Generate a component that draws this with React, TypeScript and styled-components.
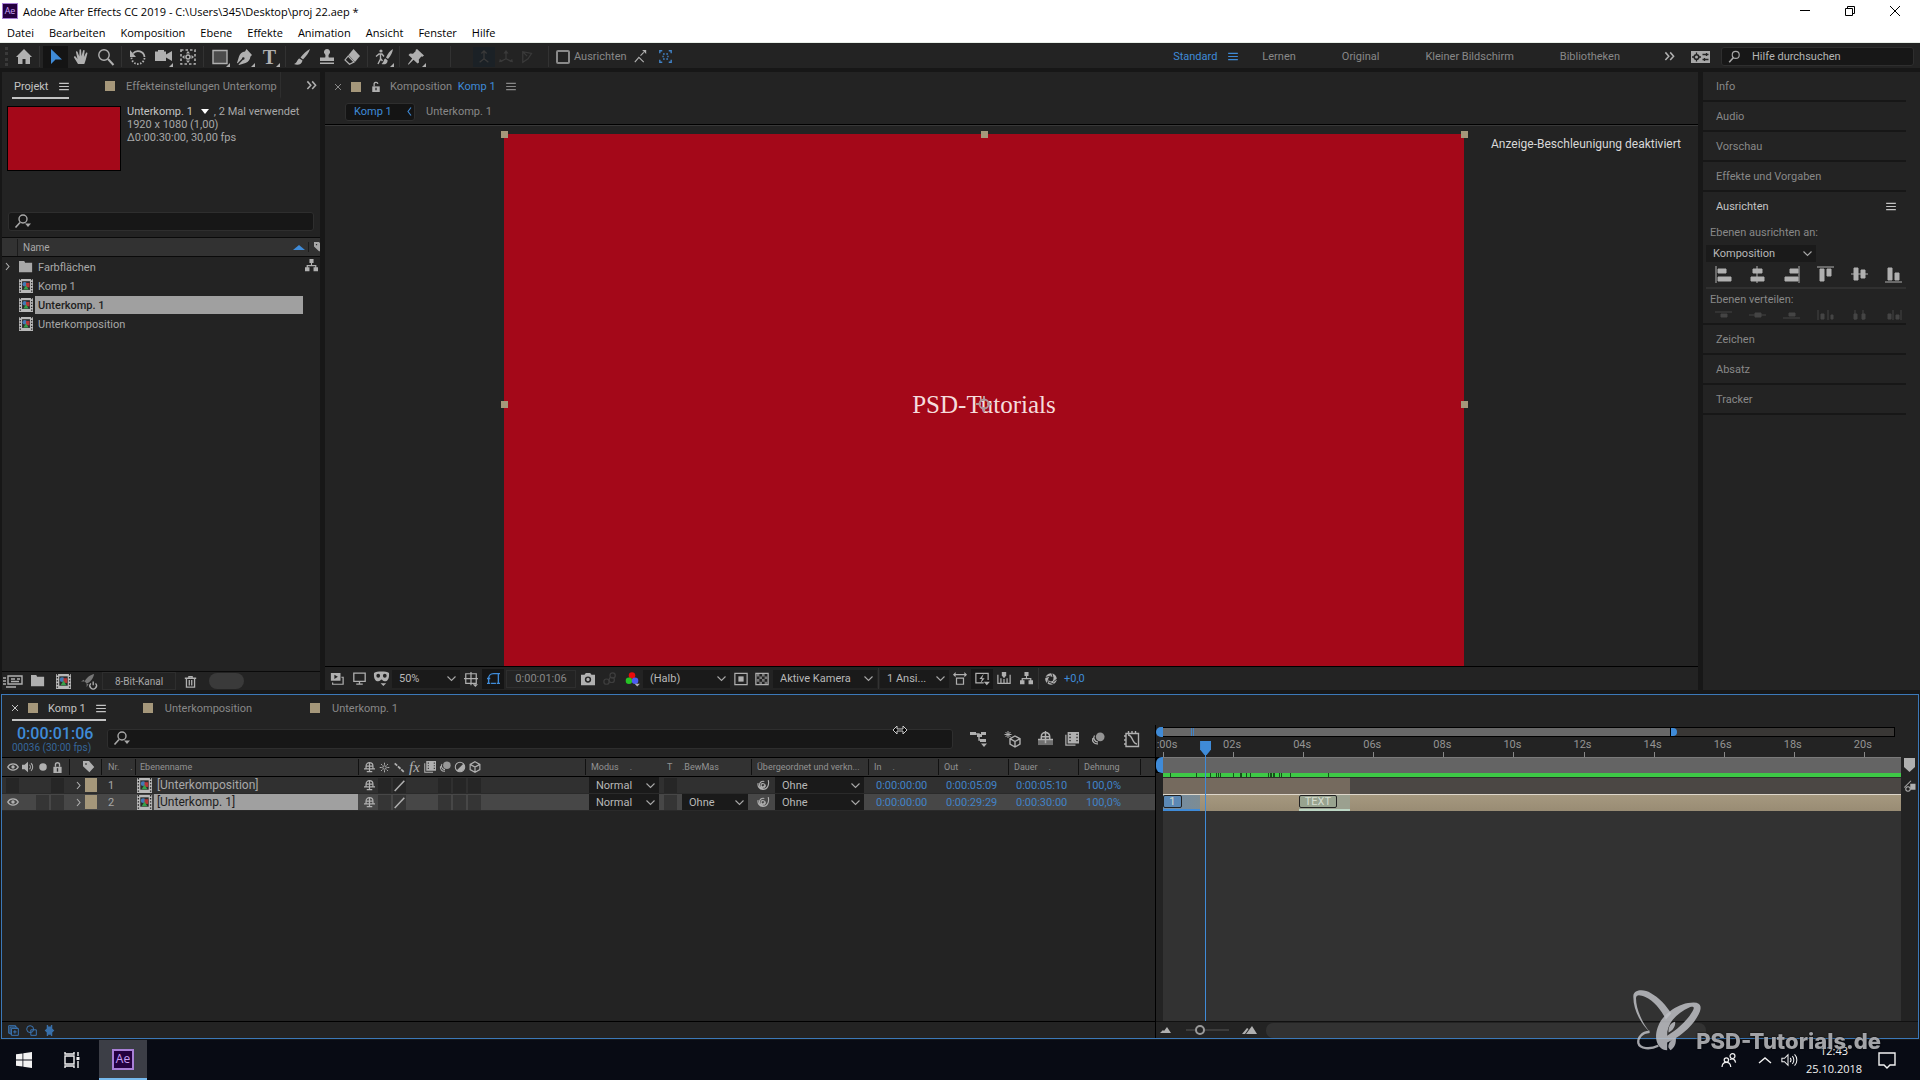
import React from 'react';
import styled, { createGlobalStyle, css } from 'styled-components';

const color = {
  panel: '#232323',
  gutter: '#171717',
  field: '#171717',
  line: '#0a0a0a',
  edge: '#2e2e2e',
  header: '#323232',
  dim: '#888888',
  text: '#a8a8a8',
  bright: '#c4c4c4',
  icon: '#b0b0b0',
  blue: '#3f8bd8',
  blueDim: '#4183c8',
  frame: '#3b78b8',
  label: '#a5977a',
  red: '#a40819',
};

const ui = 'Roboto, "Noto Sans", sans-serif';
const win = '"Open Sans", "Noto Sans", sans-serif';

const GlobalStyle = createGlobalStyle`
  *, *::before, *::after { box-sizing: border-box; }
  html, body, #root { height: 100%; }
  body { margin: 0; background: ${color.gutter}; overflow: hidden; }
  button, input, select { font: inherit; color: inherit; margin: 0; }
  button { padding: 0; border: 0; background: none; }
`;

const Shell = styled.div`
  height: 100vh;
  display: grid;
  grid-template-rows: auto auto auto minmax(0, 1fr) 346px 40px;
  font: 11px/13px ${ui};
  color: ${color.text};
  background: ${color.gutter};
`;

/* ---------- icons ---------- */

const Svg = styled.svg<{ $w?: number; $h?: number; $line?: number }>`
  display: block;
  flex: none;
  width: ${p => p.$w ?? 16}px;
  height: ${p => p.$h ?? p.$w ?? 16}px;
  fill: none;
  stroke: currentColor;
  stroke-width: ${p => p.$line ?? 1.4};
  overflow: visible;
`;

const F = { fill: 'currentColor', stroke: 'none' } as const;

const glyphs: Record<string, React.ReactNode> = {
  home: <path {...F} d="M8 0 0 8h2v7h4.500v-5h3v5H14V8h2z" />,
  arrow: <path {...F} d="M3 0v15l4.500-4.500H14z" />,
  hand: <path {...F} d="M5 15 1 8.500c-.5-1 .8-1.800 1.600-.9L4.500 10 3 3.300c-.2-1 1.200-1.400 1.600-.3L6.300 7.500 6.500 1c0-1.100 1.500-1.100 1.600 0l.4 6.300L10 1.700c.3-1 1.700-.7 1.600.3l-.7 6 2-4c.5-.9 1.800-.4 1.500.6-1 3.500-1.700 7.400-3.100 10.400z" />,
  zoom: <><circle cx="6" cy="6" r="5.200" /><path strokeWidth="2" d="m10 10 5.500 6" /></>,
  rotate: <><path strokeWidth="1.800" d="M3 4.500A6.500 6.500 0 0 1 14.500 8" /><path strokeDasharray="1.500 1.500" strokeWidth="1.800" d="M14.500 9A6.500 6.500 0 0 1 1.500 8" /><path {...F} d="M0 1v7h6z" /></>,
  camera: <path {...F} d="M0 2.500h3V1h6v1.500h2v3L17 2v10l-6-3.500V12H0z" />,
  panBehind: <><path strokeDasharray="2.500 2" d="M1 1h14v14H1z" strokeWidth="1.600" /><path {...F} d="m8 2 2 2.500H6zM8 14l2-2.500H6zM2 8l2.500-2v4zM14 8l-2.500-2v4z" /><circle cx="8" cy="8" r="2" strokeWidth="1.500" /></>,
  rect: <><path fill="#4c4c4c" d="M1 1.500h14v13H1z" /></>,
  pen: <path {...F} d="M9.500 0 15 6l-1.500 1.500c-.5 3-2 5.500-5 6.500L2 16l-.5-.6 4.500-4.600a1.300 1.300 0 1 0-1-1L.7 14.200 0 14l2-6.500c1-3 3-4.500 6-5z" />,
  brush: <path {...F} d="M16 0c-3 1.500-7 5-9.500 8.500l2.500 2C12 7.500 15 3.500 16 0zM5.500 9.500C3 10 3.500 14 0 15c3.500 1.500 8 .5 8.500-3.500z" />,
  stamp: <path {...F} d="M8 0a3 3 0 0 1 2 5.300c-.7.900-.5 2.200-.2 3.200H15V12H1V8.500h5.200c.3-1 .5-2.300-.2-3.200A3 3 0 0 1 8 0zM1 13.500h14V15H1z" />,
  eraser: <><path {...F} d="m9.500 0 6.500 7-5 6L4.500 6z" /><path d="m4.200 7-3.200 4 4.500 4.300L10 13z" strokeWidth="1.200" /></>,
  roto: <><path {...F} d="M17 0c-3 1.500-5.500 5-7 8.500l2 1.500c3-3 4.500-7 5-10zM9.500 9.500C7.500 10 8 13.500 5.500 15c3 1 6 0 6.200-3.500z" /><circle {...F} cx="5" cy="2" r="1.600" /><path d="M0 7.500 3 5h3l2 2.500M4.500 5v5L2 15M5 10l1.500 2" /></>,
  pin: <path {...F} d="m9 0 7 6.500-1.500 1.300-1.200-.3-2.500 3 .2 3-1.500 1-4-3.700-5 5L0 15l4.200-5.500L.5 6 2 4.600l3 .2L7.800 2 7.500.9z" />,
  axis1: <path d="M8 1v9m0 0-5 4m5-4 5 4M5 4l3-3 3 3" />,
  axis2: <><path d="M8 2v8m0 0-6 3m6-3 6 3" /><path {...F} d="m8 0 3 4H5zM0 14l1-4 3 3zM16 14l-1-4-3 3z" /></>,
  axis3: <path d="M2 14V2l10 2-4 6zM2 2l5 5" />,
  snapTip: <><path d="m1 15 5-6 6 6M8 7l4-4" /><path {...F} d="M10 0h5v5z" /></>,
  extent: <><path strokeWidth="1.700" d="M1 4V1h3M12 1h3v3M15 12v3h-3M4 15H1v-3" /><path strokeWidth="1.700" d="M5 5h2M9 5h2M5 11h2M9 11h2M5 7v2M11 7v2" /></>,
  chevrons: <path strokeWidth="2.200" d="m2 2 5 5.500L2 13M9 2l5 5.500L9 13" />,
  menu: <path strokeWidth="1.700" d="M0 2h14M0 6.500h14M0 11h14" />,
  workspace: <><path {...F} d="M0 2h19v12H0z" /><circle cx="5.500" cy="8" r="2.300" stroke="#232323" strokeWidth="1.600" /><path stroke="#232323" d="M5.500 3.500v2M5.500 10.500v2M1 8h2M8 8h2M11.500 5.500h6M15.500 4v3M11.500 10.500h6M13.500 9v3" strokeWidth="1.300" /></>,
  search: <><circle cx="9.500" cy="6" r="4.300" /><path strokeWidth="2" d="M6.500 9.500 1.500 15" /></>,
  searchDown: <><circle cx="8" cy="5" r="4" /><path strokeWidth="1.600" d="M5 8.500.5 13.500" /><path {...F} d="M10 9.500h6l-3 3.500z" /></>,
  folder: <path {...F} d="M0 1h6l1 2h8v11H0z" />,
  comp: <><path {...F} fill="#b8b8b8" d="M0 0h16v16H0z" /><path stroke="#222" strokeWidth="1.400" strokeDasharray="1.500 1.800" d="M1.500 0v16M14.500 0v16" /><path fill="#2c2c2c" stroke="none" d="M3.500 2.500h9v10h-9z" /><circle cx="6.500" cy="6" r="2.500" fill="#4379b4" stroke="none" /><path fill="#b43737" stroke="none" d="M8 4.500h4v5H8z" /><path fill="#36a04a" stroke="none" d="m8 7 3 5H5z" /></>,
  tree: <path {...F} d="M5.500 0h5v5H8.700v2.500H14V10h2v5h-5.500v-5h2V9h-9v1h2v5H0v-5h2V7.500h5.300V5H5.500z" />,
  interpret: <><path d="M5 2h14v8H5z" /><path d="M8 5h4M14 5h3M8 7.500h8" /><path d="M0 4h3M0 7h3M0 10h3M3 13h10" /></>,
  tag: <path {...F} fillRule="evenodd" d="M0 0h8l7 8-6.500 7L0 7zM3 3v2h2V3z" />,
  rocket: <><path {...F} fill="#777" d="M14 0C9 1 5 5 4 8l2 2c4-1 7-5 8-10zM0 8l3-2 1 2zM6 14l2-3-2-1z" /><path d="M13 8v4M10.500 10a3.500 3.500 0 1 0 5 0" /></>,
  trash: <path strokeWidth="1.600" d="M1 4h14M6 4V2h4v2M3 4v11h10V4M6.500 6v7M9.500 6v7" />,
  unlock: <><path {...F} d="M2 7h12v9H2z" /><path strokeWidth="2" d="M5 7V4a3 3 0 0 1 6-1" /><path stroke="#232323" d="M8 9v4" strokeWidth="2" /></>,
  lock: <><path {...F} d="M2 7h12v9H2z" /><path strokeWidth="2" d="M5 7V4a3 3 0 0 1 6 0v3" /><path stroke="#323232" d="M8 9v5" strokeWidth="2" /></>,
  stack: <><path d="M3 12v2h12V6h-2" /><path {...F} fillRule="evenodd" d="M1 1h11v9H1zm4 2v5l4-2.500z" /></>,
  monitor: <path d="M1 1.500h14v10H1zM8 12v3M4 15h8" strokeWidth="1.600" />,
  mask: <path {...F} fillRule="evenodd" d="M0 2c3-2 13-2 16 0 .5 6-1.500 9-4.500 9C9.500 11 9 9 8 9s-1.500 2-3.500 2C1.500 11-.5 8 0 2zm2.500 3a2 2.200 0 1 0 4 0 2 2.200 0 1 0-4 0zm7 0a2 2.200 0 1 0 4 0 2 2.200 0 1 0-4 0zM7 13h6l-3 3z" />,
  target: <><path d="M2 2h12v11H2zM8 0v15M0 7.500h16" /><path {...F} d="M10 14h6l-3 3z" /></>,
  shape: <path strokeWidth="1.700" d="M2 14V8c0-3 2-6 6-6h6v12M0 14h4M12 14h4M5 14h6M12 2h4M0 8h4" />,
  snapshot: <path {...F} fillRule="evenodd" d="M0 3h4l1.500-2h5L12 3h4v12H0zm8 2a3.600 3.600 0 1 0 0 7.200A3.600 3.600 0 0 0 8 5zm0 1.700a1.900 1.900 0 1 1 0 3.800 1.900 1.900 0 0 1 0-3.800z" />,
  links: <><circle cx="11" cy="4" r="3" /><circle cx="10" cy="9" r="3" /><circle cx="4" cy="11" r="3" /></>,
  rgb: <><circle cx="8" cy="4" r="3.700" fill="#e80c0c" stroke="none" /><circle cx="4.500" cy="10" r="3.700" fill="#26c426" stroke="none" /><circle cx="11.500" cy="10" r="3.700" fill="#4a5cf0" stroke="none" /><path {...F} d="M11 13.500h6l-3 3z" /></>,
  region: <><path d="M1 1.500h14v13H1z" /><path {...F} d="M5 5h6v6H5z" /></>,
  checker: <><path d="M1 1.500h14v13H1z" /><path {...F} opacity=".6" d="M2 2h3v3H2zM8 2h3v3H8zM5 5h3v3H5zM11 5h3v3h-3zM2 8h3v3H2zM8 8h3v3H8zM5 11h3v3H5zM11 11h3v3h-3z" /></>,
  aspect: <><path d="M4 7h8v7H4zM1 3h14" /><path {...F} d="M0 3l3-3v6zM16 3l-3-3v6z" /></>,
  fast: <><path d="M15 9V1.500H1v11h9" /><path {...F} d="M10 2 5 8h3l-2 5 5-6H8zM10 11h7l-3.500 4z" /></>,
  chart: <><path d="M1 3v10h14V3M4.500 7v6M8 8v5M11.500 7v6" /><path {...F} d="M5.500 0h5v4L8 7 5.500 4z" /></>,
  aperture: <><circle cx="8" cy="8" r="5.500" strokeWidth="4.500" /><path stroke="#232323" strokeWidth="1.200" d="m9 0 2 7M16 8l-5 4M12 15l-7-3M3 14l2-7M0 6l8-2" /></>,
  eye: <><path strokeWidth="1.800" d="M1 8c3-5.500 11-5.500 14 0-3 5.500-11 5.500-14 0z" /><circle {...F} cx="8" cy="8" r="2.300" /></>,
  speaker: <><path {...F} d="M0 5h3.500L8 1v14l-4.500-4H0z" /><path d="M10 5c1.500 1.500 1.500 4.500 0 6M12 3c3 2.500 3 7.500 0 10" /></>,
  dot: <circle {...F} cx="8" cy="8" r="5" />,
  shy: <><path strokeWidth="1.800" d="M3 10V6a5 5 0 0 1 10 0v4M0 10h16M8 1v13M3 6h10M4 14h8" /></>,
  sun: <><circle cx="8" cy="8" r="2.500" /><path d="M8 1v3M8 12v3M1 8h3M12 8h3M3 3l2 2M11 11l2 2M13 3l-2 2M5 11l-2 2" /></>,
  quality: <path strokeWidth="2.600" strokeDasharray="5 1.500" d="m1 2 14 13" />,
  slash: <path strokeWidth="2.200" d="M1 16 15 1" />,
  film: <><path d="M1 3v12h11" /><path {...F} fillRule="evenodd" d="M3 0h13v13H3zm2 2v1.500h1.500V2zm0 3.500V7h1.500V5.500zM5 9v1.500h1.500V9zm8-7v1.500h1.500V2zm0 3.500V7h1.500V5.500zM13 9v1.500h1.500V9z" /></>,
  blur: <><circle {...F} opacity=".8" cx="10.500" cy="5.500" r="5" /><path d="M4 4c-2 3 0 7 4 7.500M2 7c-1 3.500 1.500 7 6 6.500" /></>,
  adjust: <><circle cx="8" cy="8" r="6.300" /><path {...F} d="M12.500 3.500a6.300 6.300 0 0 1-9 9z" /></>,
  cube: <path strokeWidth="1.600" d="m8 1 6.500 3.500v7L8 15l-6.500-3.500v-7zM1.500 4.500 8 8l6.500-3.500M8 8v7" />,
  flow: <><path {...F} d="M0 1h6v3H0zM7 3h5v3H7zM11 1h5v3h-5zM10 8h6v3h-6zM11 12.500h6L14 16z" /><path d="M5 3h4v6h3" /></>,
  draft3d: <><path d="m11 5 5 2.700v5.500L11 16l-5-2.800V7.700zM6 7.700l5 2.800 5-2.800M11 10.500V16" /><path d="M4 0v7M.5 3.500h7M1.500 1l5 5M6.500 1l-5 5" strokeWidth="1" /></>,
  shyBig: <><path {...F} opacity=".55" d="M0 9h16v6H0z" /><path d="M3.500 9V6a4.500 4.500 0 0 1 9 0v3M0 9h16M8 0v13M3 6h10" strokeWidth="1.600" /></>,
  graph: <path d="M2 2.500h12.500v13H2zM4 4c5 0 4 9 9 9M4.500 0v2M8 0v2M11.500 0v2M0 5h2M0 9h2M0 13h2" />,
  pickwhip: <path strokeWidth="1.500" d="M10 8.200A2.300 2.300 0 1 1 7.600 6c3 0 4.400 2.800 2.600 5-2 2.300-6.500 1.200-6.900-2.500C3 4.500 6.500 2.300 9.700 3.300M15 1.500c1.500 6-1 12.500-7 12.500C3 14 .5 9.500 1.500 5.500" />,
  copies: <><path d="M5 5h10v10H5zM3 12H1V1h10v2" /><path d="M3 3h10v2M5 13H3V3M10 7.500v5M7.500 10h5" /></>,
  modes: <><circle cx="6" cy="6" r="5" /><path d="M7 7h8v8H7z" /></>,
  braces: <path {...F} opacity=".9" d="M4 0h2v2h4V0h2v5l3 3-3 3v5h-2v-2H6v2H4v-5L1 8l3-3z" />,
  people: <><circle cx="12" cy="3.500" r="2.800" /><circle cx="5" cy="8" r="2.500" /><path d="M0 16c.5-7 9.500-7 10 0M9 7.500c3-2 6-.5 6.500 3.500" /></>,
  volume: <path strokeWidth="1.200" d="M1 6h3l4-4v12l-4-4H1zM10.500 5.500c1.200 1.500 1.200 3.500 0 5M13 3.500c2.200 2.500 2.200 6.500 0 9M15.500 1.500c3.500 3.500 3.500 9.500 0 13" />,
  notice: <path d="M0 1h16v12h-5l-3 3-3-3H0z" />,
  taskView: <><path d="M1 4h9v8H1zM1 0v2h9V0M1 16v-2h9v2M14 0v4M14 9v7" /><path {...F} d="M12.500 5h3v3h-3z" /></>,
  windows: <path {...F} d="m0 2.300 6.500-.9v6.200H0zM7.300 1.300 16 0v7.600H7.300zM0 8.400h6.500v6.200L0 13.700zM7.300 8.400H16V16l-8.700-1.300z" />,
};

const Glyph = ({ name, w, h }: { name: string; w?: number; h?: number }) => (
  <Svg $w={w} $h={h} viewBox="0 0 16 16" aria-hidden>{glyphs[name]}</Svg>
);

const Wide = ({ name, w, h }: { name: string; w: number; h: number }) => (
  <Svg $w={w} $h={h} viewBox={`0 0 ${w} ${h}`} aria-hidden>{glyphs[name]}</Svg>
);

const MenuLines = () => (
  <Svg $w={10} $h={9} viewBox="0 0 14 13" aria-hidden>{glyphs.menu}</Svg>
);

const Cross = () => (
  <Svg $w={6} $line={1} viewBox="0 0 6 6" aria-hidden><path d="m0 0 6 6M6 0 0 6" /></Svg>
);

const Chevron = ({ right }: { right?: boolean }) => (
  <Svg $w={9} $line={1.1} viewBox="0 0 9 9" aria-hidden>
    <path d={right ? 'm3 1 3 3.500L3 8' : 'm0.500 2.500 4 4 4-4'} />
  </Svg>
);

/* ---------- shared parts ---------- */

const Center = css`
  display: flex;
  align-items: center;
  justify-content: center;
`;

const Swatch = styled.span<{ $size?: number; $tall?: number }>`
  flex: none;
  width: ${p => p.$size ?? 10}px;
  height: ${p => p.$tall ?? p.$size ?? 10}px;
  background: ${color.label};
`;

const IconButton = styled.button<{ $w?: number; $tone?: string; $fill?: string }>`
  ${Center}
  flex: none;
  width: ${p => p.$w ?? 22}px;
  height: 20px;
  color: ${p => p.$tone ?? color.icon};
  background: ${p => p.$fill ?? 'none'};
`;

const Rule = styled.span<{ $gap?: number }>`
  flex: none;
  width: 1px;
  height: 21px;
  margin: 0 ${p => p.$gap ?? 3}px;
  background: #323232;
`;

const SelectFrame = styled.span<{ $w: number; $h?: number }>`
  display: inline-grid;
  grid-template-columns: 1fr 18px;
  align-items: center;
  flex: none;
  width: ${p => p.$w}px;
  height: ${p => p.$h ?? 18}px;
  color: ${color.text};
  background: #1a1a1a;
  svg { grid-area: 1 / 2; justify-self: center; pointer-events: none; }
`;

const SelectField = styled.select`
  grid-area: 1 / 1 / 2 / 3;
  appearance: none;
  width: 100%;
  height: 100%;
  padding: 0 18px 0 7px;
  border: 0;
  border-radius: 0;
  background: none;
  color: #b8b8b8;
  font-size: 11px;
  text-overflow: clip;
`;

const Dropdown = ({ label, value, w, h }: { label: string; value: string; w: number; h?: number }) => (
  <SelectFrame $w={w} $h={h}>
    <SelectField aria-label={label} defaultValue={value}><option>{value}</option></SelectField>
    <Chevron />
  </SelectFrame>
);

const SearchBox = styled.label`
  display: flex;
  align-items: center;
  gap: 7px;
  height: 19px;
  padding-left: 6px;
  border: 1px solid ${color.edge};
  border-radius: 3px;
  background: ${color.field};
  color: ${color.text};
  input {
    flex: 1;
    min-width: 0;
    height: 100%;
    padding: 0;
    border: 0;
    outline: 0;
    background: none;
  }
  input::placeholder { color: #b4b4b4; opacity: 1; }
`;

/* ---------- window chrome ---------- */

const TitleBar = styled.header`
  display: flex;
  align-items: center;
  height: 22px;
  padding: 0 3px 0 2px;
  background: #fff;
  color: #000;
  font: 11px/15px ${win};
`;

const AeBadge = styled.span<{ $big?: boolean }>`
  ${Center}
  flex: none;
  width: ${p => (p.$big ? 22 : 16)}px;
  height: ${p => (p.$big ? 21 : 16)}px;
  border: ${p => (p.$big ? 2 : 1)}px solid #a87fd6;
  background: #24003f;
  color: #c9a0f5;
  font: ${p => (p.$big ? '12px' : '9px')}/12px ${win};
`;

const Title = styled.h1`
  flex: 1;
  margin: 0 0 0 5px;
  font: inherit;
`;

const WindowButton = styled.button`
  ${Center}
  width: 45px;
  height: 20px;
`;

const MenuBar = styled.nav`
  display: flex;
  gap: 15px;
  height: 21px;
  padding: 0 7px;
  border-bottom: 1px solid #e8efe8;
  background: #fff;
  color: #000;
  font: 11px/21px ${win};
  button { height: 20px; }
`;

const Toolbar = styled.div`
  display: flex;
  align-items: center;
  height: 25px;
  padding: 2px 6px 0 0;
  background: ${color.panel};
`;

const Grip = styled.span`
  width: 3px;
  height: 19px;
  margin: 0 3px 0 5px;
  border-left: 3px dotted #3a3a3a;
`;

const Tool = styled.button<{ $active?: boolean; $more?: boolean }>`
  ${Center}
  position: relative;
  flex: none;
  width: 25px;
  height: 22px;
  color: ${p => (p.$active ? color.blue : color.icon)};
  background: ${p => (p.$active ? '#141414' : 'none')};
  ${p => p.$more && css`
    &::after {
      content: '';
      position: absolute;
      right: 2px;
      bottom: 1px;
      border: 2px solid transparent;
      border-right-color: ${color.icon};
      border-bottom-color: ${color.icon};
    }
  `}
`;

const ToolLetter = styled.span`
  font: bold 20px/20px "Liberation Serif", serif;
`;

const AxisTools = styled.div`
  display: flex;
  margin-right: 6px;
`;

const SnapOption = styled.label`
  display: flex;
  align-items: center;
  gap: 4px;
  margin: 0 6px 0 4px;
  color: ${color.dim};
  input {
    appearance: none;
    width: 14px;
    height: 14px;
    border: 2px solid #8a8a8a;
    border-radius: 2px;
  }
`;

const Workspaces = styled.nav`
  display: flex;
  align-items: center;
  gap: 46px;
  margin: 0 27px 0 auto;
  color: ${color.dim};
`;

const WorkspaceTab = styled.button<{ $on?: boolean }>`
  display: flex;
  align-items: center;
  gap: 11px;
  margin-right: ${p => (p.$on ? -22 : 0)}px;
  color: ${p => (p.$on ? color.blue : 'inherit')};
`;

const HelpSearch = styled(SearchBox)`
  width: 193px;
  margin-left: 11px;
  gap: 11px;
`;

/* ---------- workspace ---------- */

const Workspace = styled.main`
  display: grid;
  grid-template-columns: 318px minmax(0, 1fr) 217px;
  gap: 5px;
  min-height: 0;
  padding: 4px 0 4px 2px;
`;

const Panel = styled.section`
  display: flex;
  flex-direction: column;
  min-width: 0;
  min-height: 0;
  background: ${color.panel};
`;

const Tab = styled.button<{ $on?: boolean; $gap?: number }>`
  display: flex;
  align-items: center;
  gap: ${p => p.$gap ?? 11}px;
  height: 27px;
  overflow: hidden;
  white-space: nowrap;
  color: ${p => (p.$on ? color.bright : color.dim)};
  border-bottom: 2px solid ${p => (p.$on ? color.bright : 'transparent')};
  padding-top: 3px;
`;

const ProjectTabs = styled.div`
  display: flex;
  align-items: center;
  height: 27px;
  padding-left: 10px;
  gap: 36px;
`;

const ProjectTab = styled(Tab)`
  justify-content: space-between;
  width: 57px;
  padding-left: 2px;
`;

const EffectTab = styled(Tab)`
  width: 176px;
  border-right: 1px solid #2e2e2e;
`;

const MoreTabs = styled.button`
  margin-left: -11px;
  color: ${color.icon};
`;

const ItemInfo = styled.div`
  display: flex;
  gap: 6px;
  height: 104px;
  padding: 7px 5px 0;
  color: ${color.text};
`;

const Thumb = styled.div`
  flex: none;
  width: 114px;
  height: 65px;
  border: 1px solid #000;
  background: ${color.red};
`;

const InfoLines = styled.p`
  margin: -1px 0 0;
  white-space: nowrap;
  strong { font-weight: 400; color: ${color.bright}; }
`;

const InfoTriangle = styled.span`
  display: inline-block;
  margin: 0 5px 0 8px;
  border: 4px solid transparent;
  border-top: 5px solid #fff;
  border-bottom: 0;
  vertical-align: 1px;
`;

const ProjectSearch = styled(SearchBox)`
  margin: 9px 6px 6px;
`;

const ProjectTable = styled.table`
  width: 100%;
  table-layout: fixed;
  border-collapse: separate;
  border-spacing: 0;
  th, td { padding: 0; height: 19px; font-weight: 400; text-align: left; }
  th {
    height: 20px;
    background: ${color.header};
    border-top: 1px solid ${color.line};
    border-bottom: 1px solid ${color.line};
    color: ${color.text};
    font-size: 10px;
    overflow: hidden;
  }
`;

const HeadCell = styled.div`
  display: flex;
  align-items: center;
  height: 17px;
  padding-left: 5px;
  border-left: 1px solid #1c1c1c;
`;

const SortMark = styled.span`
  margin: 0 3px 0 auto;
  border: 6px solid transparent;
  border-top: 0;
  border-bottom: 5px solid ${color.blue};
`;

const TagSlot = styled.div`
  padding-left: 5px;
  border-left: 1px solid #1c1c1c;
`;

const TreeButton = styled.button`
  margin-left: -3px;
  color: ${color.icon};
`;

const ItemName = styled.div<{ $selected?: boolean }>`
  display: grid;
  grid-template-columns: 18px 1fr;
  align-items: center;
  height: 19px;
  padding-right: 5px;
  svg { margin-left: 2px; }
  span {
    height: 18px;
    padding-left: 3px;
    line-height: 19px;
    color: ${p => (p.$selected ? '#1e1e1e' : color.text)};
    background: ${p => (p.$selected ? '#a0a0a0' : 'none')};
    font-weight: ${p => (p.$selected ? 500 : 400)};
  }
`;

const Expander = styled.button`
  ${Center}
  width: 10px;
  height: 17px;
  margin-right: 2px;
  color: ${color.icon};
`;

const PanelFooter = styled.footer`
  display: flex;
  align-items: center;
  gap: 3px;
  height: 19px;
  margin-top: auto;
  border-top: 1px solid ${color.line};
`;

const DepthButton = styled.button`
  width: 74px;
  height: 18px;
  border: 1px solid ${color.edge};
  font-size: 10px;
`;

const ScrollPill = styled.span`
  width: 35px;
  height: 16px;
  margin-left: 5px;
  border-radius: 8px;
  background: #3a3a3a;
`;

const CompTabs = styled.div`
  display: flex;
  align-items: center;
  height: 27px;
  padding: 2px 0 0 10px;
  gap: 10px;
  color: ${color.dim};
`;

const CompLock = styled.button`
  color: ${color.icon};
`;

const CompName = styled.span`
  margin-left: -1px;
  em { margin-left: 3px; font-style: normal; color: ${color.blue}; }
`;

const CompPath = styled.nav`
  display: flex;
  align-items: center;
  gap: 11px;
  height: 26px;
  padding: 0 20px;
  border-bottom: 1px solid #000;
  box-shadow: 0 1px #383838;
  color: ${color.dim};
`;

const PathChip = styled.button`
  display: flex;
  align-items: center;
  justify-content: space-between;
  width: 70px;
  height: 18px;
  padding: 0 0 0 8px;
  border: 1px solid ${color.edge};
  border-radius: 3px;
  background: #141414;
  color: ${color.blue};
`;

const Viewer = styled.div`
  display: flex;
  align-items: flex-start;
  flex: 1;
  min-height: 0;
  padding: 9px 17px 0 179px;
  overflow: hidden;
`;

const Canvas = styled.div`
  ${Center}
  position: relative;
  flex: none;
  width: 960px;
  height: 540px;
  padding-top: 2px;
  background: ${color.red};
  color: #f5dcdc;
  font: 25px/30px "Liberation Serif", serif;
`;

const Handle = styled.i<{ $x: string; $y: string }>`
  position: absolute;
  left: ${p => p.$x};
  top: ${p => p.$y};
  width: 7px;
  height: 7px;
  margin: -3px 0 0 -3px;
  background: ${color.label};
`;

const Anchor = styled(Svg)`
  position: absolute;
  left: calc(50% - 9px);
  top: calc(50% - 9px);
  color: #b09698;
`;

const Notice = styled.p`
  margin: 4px 0 0 auto;
  color: #d8d8d8;
  font-size: 12px;
`;

const ViewerBar = styled.footer`
  display: flex;
  align-items: center;
  height: 24px;
  padding-left: 1px;
  border-top: 1px solid #000;
`;

const TimeBox = styled.button`
  width: 70px;
  height: 18px;
  margin: 0 1px 0 2px;
  border: 1px solid ${color.edge};
  color: ${color.dim};
`;

const Exposure = styled.button`
  margin-left: 2px;
  color: ${color.blue};
`;

/* ---------- right column ---------- */

const Side = styled.aside`
  display: flex;
  flex-direction: column;
  padding-right: 14px;
  background: ${color.panel};
`;

const SideItem = styled.button<{ $open?: boolean }>`
  display: flex;
  align-items: center;
  justify-content: space-between;
  height: 30px;
  padding: 0 10px ${p => (p.$open ? 2 : 0)}px 13px;
  border-bottom: ${p => (p.$open ? 0 : 2)}px solid ${color.gutter};
  color: ${p => (p.$open ? color.bright : color.dim)};
  text-align: left;
`;

const AlignPanel = styled.div`
  display: flex;
  flex-direction: column;
  height: 103px;
  padding: 4px 0 0 3px;
  border-bottom: 2px solid ${color.gutter};
  color: ${color.dim};
`;

const AlignLabel = styled.label<{ $low?: boolean }>`
  height: ${p => (p.$low ? 17 : 19)}px;
  padding: ${p => (p.$low ? 4 : 0)}px 0 0 4px;
  line-height: 13px;
`;

const AlignRow = styled.div<{ $faint?: boolean }>`
  display: grid;
  grid-template-columns: repeat(6, 34px);
  height: ${p => (p.$faint ? 12 : 27)}px;
  align-items: center;
  border-bottom: ${p => (p.$faint ? 0 : 2)}px solid #303030;
  color: ${p => (p.$faint ? '#444' : color.icon)};
  button { ${Center} height: 18px; }
`;

/* ---------- timeline ---------- */

const Timeline = styled.section`
  display: flex;
  flex-direction: column;
  margin: 0 1px 1px;
  border: 1px solid ${color.frame};
  background: ${color.panel};
`;

const TimelineTabs = styled.div`
  display: flex;
  gap: 37px;
  height: 30px;
  padding-left: 10px;
  ${Tab} { height: 26px; padding-top: 2px; }
`;

const SecondTab = styled(Tab)`
  margin-left: 21px;
`;

const TimelineBody = styled.div`
  display: grid;
  grid-template-columns: 1153px minmax(0, 1fr);
  flex: 1;
  min-height: 0;
`;

const LayerSide = styled.div`
  display: flex;
  flex-direction: column;
  min-height: 0;
`;

const Controls = styled.div`
  display: flex;
  align-items: center;
  height: 32px;
  padding: 0 3px 5px 10px;
`;

const Timecode = styled.div`
  width: 96px;
  padding-top: 2px;
  color: ${color.frame};
  font-size: 10px;
  line-height: 12px;
  strong {
    display: block;
    padding-left: 5px;
    color: ${color.blue};
    font: 500 16px/17px ${ui};
  }
  span { opacity: 0.8; }
`;

const LayerSearch = styled(SearchBox)`
  position: relative;
  width: 850px;
  height: 20px;
  margin-right: 10px;
`;

const ResizeCursor = styled(Svg)`
  position: absolute;
  right: 45px;
  top: -4px;
`;

const ControlButton = styled.button<{ $w: number }>`
  ${Center}
  width: ${p => p.$w}px;
  height: 20px;
  color: ${color.icon};
`;

const LayerTable = styled.table`
  width: 1153px;
  table-layout: fixed;
  border-collapse: separate;
  border-spacing: 0;
  th, td { padding: 0; font-weight: 400; text-align: left; }
`;

const HeadRow = styled.tr`
  height: 20px;
  background: ${color.header};
  color: #929292;
  font-size: 9px;
  th { border-top: 1px solid #000; border-bottom: 1px solid #000; }
`;

const LayerRow = styled.tr<{ $selected?: boolean }>`
  height: 17px;
  background: ${p => (p.$selected ? '#474747' : '#303030')};
  td { border-bottom: 1px solid #2a2a2a; }
`;

const Cell = styled.div<{ $pad?: number; $rule?: boolean; $tone?: string }>`
  display: flex;
  align-items: center;
  height: 16px;
  padding-left: ${p => p.$pad ?? 0}px;
  border-left: ${p => (p.$rule ? 1 : 0)}px solid #111;
  color: ${p => p.$tone ?? 'inherit'};
  overflow: hidden;
  white-space: nowrap;
  > em { margin-left: 11px; font-style: normal; }
`;

const Switches = styled.div<{ $pad: number }>`
  display: flex;
  gap: 2px;
  padding-left: ${p => p.$pad}px;
`;

const Switch = styled.button<{ $filled?: boolean }>`
  ${Center}
  width: 13px;
  height: 15px;
  color: ${color.icon};
  background: ${p => (p.$filled ? 'rgba(20, 20, 20, 0.35)' : 'none')};
  font: italic 15px/13px "Liberation Serif", serif;
`;

const LayerName = styled.span<{ $selected?: boolean }>`
  flex: 1;
  height: 16px;
  margin-left: 2px;
  padding-left: 3px;
  line-height: 16px;
  font-size: 12px;
  color: ${p => (p.$selected ? '#1e1e1e' : color.text)};
  background: ${p => (p.$selected ? '#a0a0a0' : 'none')};
`;

const TimeLink = styled.button`
  color: ${color.blueDim};
`;

const LayerFooter = styled.footer`
  display: flex;
  align-items: center;
  gap: 2px;
  height: 17px;
  margin-top: auto;
  padding-left: 3px;
  border-top: 1px solid #000;
`;

/* time graph */

const RAIL = 17;
const SPAN = 21.06;
const at = (seconds: number) => `${(seconds / SPAN) * 100}%`;

const GraphSide = styled.div`
  position: relative;
  display: flex;
  flex-direction: column;
  min-height: 0;
  border-left: 1px solid #000;
  overflow: hidden;
`;

const TrackRow = styled.div<{ $h: number; $bg?: string }>`
  display: grid;
  grid-template-columns: 7px minmax(0, 1fr) ${RAIL}px;
  flex: none;
  height: ${p => p.$h}px;
  background: ${p => p.$bg ?? 'none'};
`;

const Cap = styled.span<{ $end?: boolean }>`
  height: 100%;
  background: ${color.blue};
  border-radius: ${p => (p.$end ? '0 6px 6px 0' : '6px 0 0 6px')};
`;

const Navigator = styled.div`
  display: flex;
  margin-right: 6px;
  border: 1px solid #000;
  border-left: 0;
  background: #393735;
  ${Cap} { width: 6px; }
`;

const NavRange = styled.span`
  position: relative;
  width: 69.500%;
  background: #686868;
  border-right: 1px solid #000;
  &::after {
    content: '';
    position: absolute;
    left: 28px;
    top: 0;
    width: 3px;
    height: 100%;
    border: solid ${color.blueDim};
    border-width: 0 1px;
  }
`;

const Ruler = styled.div`
  position: relative;
  color: #949494;
`;

const RulerMark = styled.span<{ $first?: boolean }>`
  position: absolute;
  top: 0;
  bottom: 0;
  width: 40px;
  margin-left: -20px;
  padding: 0 2px 0 ${p => (p.$first ? 10 : 0)}px;
  line-height: 16px;
  text-align: center;
  &::after {
    content: '';
    position: absolute;
    left: 20px;
    bottom: 0;
    width: 1px;
    height: 5px;
    background: ${color.dim};
  }
`;

const CacheLine = styled.div`
  position: relative;
  background: #3ec846;
`;

const CacheGap = styled.i`
  position: absolute;
  top: 0;
  bottom: 0;
  width: 1px;
  background: #16501a;
`;

const WorkArea = styled.div`
  background: #646464;
  border-top: 1px solid #7a7a7a;
`;

const LayerTrack = styled.div<{ $selected?: boolean }>`
  position: relative;
  background: ${p => (p.$selected ? 'linear-gradient(#a5987f, #998c74)' : '#4b4744')};
  border-top: 1px solid ${p => (p.$selected ? '#ddd6ca' : '#2c2a28')};
`;

const Span = styled.span<{ $bg: string; $foot?: string }>`
  position: absolute;
  top: 0;
  bottom: 0;
  background: ${p => p.$bg};
  border-bottom: ${p => (p.$foot ? 2 : 0)}px solid ${p => p.$foot ?? 'transparent'};
`;

const Marker = styled.span<{ $bg: string }>`
  position: absolute;
  top: 0;
  height: 13px;
  border: 1px solid #222;
  border-radius: 2px;
  background: ${p => p.$bg};
  color: #d5dccf;
  font-size: 11px;
  line-height: 11px;
  text-align: center;
`;

const EmptyTracks = styled.div`
  display: grid;
  grid-template-columns: 7px minmax(0, 1fr) ${RAIL}px;
  flex: 1;
  i { background: #323232; }
`;

const PlayheadLane = styled.div`
  position: absolute;
  inset: 16px ${RAIL}px 17px 7px;
  pointer-events: none;
`;

const Playhead = styled.div`
  position: absolute;
  top: 0;
  bottom: 0;
  width: 11px;
  margin-left: -5px;
  &::before {
    content: '';
    display: block;
    height: 14px;
    background: ${color.blue};
    clip-path: polygon(0 0, 100% 0, 100% 60%, 60% 100%, 40% 100%, 0 60%);
  }
  &::after {
    content: '';
    position: absolute;
    left: 5px;
    top: 12px;
    bottom: 0;
    width: 1px;
    background: ${color.blue};
  }
`;

const GraphFooter = styled.footer`
  display: flex;
  align-items: center;
  height: 17px;
  padding-left: 4px;
  border-top: 1px solid #111;
  color: ${color.icon};
`;

const ZoomSlider = styled.input`
  appearance: none;
  width: 43px;
  height: 12px;
  margin: 0 13px 0 15px;
  background: linear-gradient(#3c3c3c, #3c3c3c) center / 100% 2px no-repeat;
  &::-webkit-slider-thumb {
    appearance: none;
    width: 10px;
    height: 10px;
    border: 2px solid #9a9a9a;
    border-radius: 50%;
    background: ${color.panel};
  }
`;

const ScrollTrack = styled.span`
  width: 440px;
  height: 15px;
  margin-left: 9px;
  border-radius: 7px;
  background: #323232;
`;

const Rail = styled.span`
  ${Center}
  color: ${color.icon};
  background: ${color.panel};
`;

/* ---------- taskbar ---------- */

const Taskbar = styled.footer`
  display: flex;
  align-items: center;
  padding-right: 25px;
  background: #080b14;
  color: #f2f2f2;
  font: 11px/18px ${win};
`;

const TaskButton = styled.button<{ $open?: boolean }>`
  ${Center}
  width: 48px;
  height: 40px;
  margin-left: ${p => (p.$open ? 3 : 0)}px;
  background: ${p => (p.$open ? '#3c3e46' : 'none')};
  border-bottom: ${p => (p.$open ? 2 : 0)}px solid #76b9ed;
`;

const Tray = styled.div`
  display: flex;
  align-items: center;
  margin-left: auto;
  gap: 10px;
`;

const People = styled.button`
  margin-right: 13px;
`;

const Clock = styled.time`
  width: 58px;
  margin-right: 6px;
  text-align: center;
  white-space: pre;
`;

const Watermark = styled.div`
  position: fixed;
  right: 39px;
  bottom: 27px;
  display: flex;
  align-items: flex-end;
  color: rgba(190, 192, 196, 0.85);
  font: 800 22px/24px Inter, sans-serif;
  text-shadow: 0 0 2px #000;
  pointer-events: none;
  svg { margin: 0 -6px 2px 0; }
`;

/* ---------- data ---------- */

const menus = ['Datei', 'Bearbeiten', 'Komposition', 'Ebene', 'Effekte', 'Animation', 'Ansicht', 'Fenster', 'Hilfe'];

const toolGroups: { name: string; label: string; more?: boolean }[][] = [
  [{ name: 'arrow', label: 'Auswahl' }, { name: 'hand', label: 'Hand' }, { name: 'zoom', label: 'Zoom' }],
  [{ name: 'rotate', label: 'Drehung' }, { name: 'camera', label: 'Kamera', more: true }, { name: 'panBehind', label: 'Ausschnitt' }],
  [{ name: 'rect', label: 'Rechteck', more: true }, { name: 'pen', label: 'Zeichenstift', more: true }, { name: 'T', label: 'Text', more: true }],
  [{ name: 'brush', label: 'Pinsel' }, { name: 'stamp', label: 'Kopierstempel' }, { name: 'eraser', label: 'Radiergummi' }],
  [{ name: 'roto', label: 'Roto-Pinsel', more: true }],
  [{ name: 'pin', label: 'Marionette', more: true }],
];

const projectItems = [
  { name: 'Farbflächen', folder: true },
  { name: 'Komp 1' },
  { name: 'Unterkomp. 1', selected: true },
  { name: 'Unterkomposition' },
];

const layers = [
  { nr: 1, name: '[Unterkomposition]', visible: false, matte: '', start: '0:00:00:00', end: '0:00:05:09', length: '0:00:05:10' },
  { nr: 2, name: '[Unterkomp. 1]', visible: true, matte: 'Ohne', start: '0:00:00:00', end: '0:00:29:29', length: '0:00:30:00', selected: true },
];

const columns = [67, 32, 34, 223, 227, 76, 19, 71, 117, 70, 70, 70, 62, 15];

const alignShapes = [
  'M1 0v17M3 3h8v4H3zM3 11h13v4H3z',
  'M8 0v17M4 3h9v4H4zM2 11h13v4H2z',
  'M16 0v17M7 3h8v4H7zM2 11h13v4H2z',
  'M0 1h17M3 3h4v12H3zM10 3h4v7h-4z',
  'M0 8h17M3 2h4v12H3zM10 4h4v8h-4z',
  'M0 16h17M3 2h4v12H3zM10 7h4v7h-4z',
];

const spreadShapes = [
  'M0 2h17M6 4h6v3H6z', 'M0 5h17M6 3h6v4H6z', 'M0 8h17M6 3h6v3H6z',
  'M1 0v10M4 4h3v5H4zM11 0v10M14 5h2v4h-2z', 'M4 0v10M3 4h3v5H3zM12 0v10M11 4h3v5h-3z', 'M3 4h3v5H3zM8 0v10M11 5h3v4h-3zM16 0v10',
];

const cacheGaps = [0.2, 0.95, 1.33, 1.52, 1.58, 1.64, 2, 2.2, 2.24, 2.36, 2.48, 3, 3.04, 3.09, 3.13, 3.17, 3.3, 3.38, 3.62, 4.7];

const headDot = <em>.</em>;

/* ---------- sections ---------- */

const ToolStrip = () => (
  <Toolbar>
    <Grip />
    <Tool aria-label="Startseite"><Glyph name="home" w={16} /></Tool>
    {toolGroups.map((group, g) => (
      <React.Fragment key={g}>
        <Rule />
        {group.map(t => (
          <Tool key={t.name} aria-label={t.label} $active={t.name === 'arrow'} $more={t.more}>
            {t.name === 'T' ? <ToolLetter>T</ToolLetter> : <Glyph name={t.name} />}
          </Tool>
        ))}
      </React.Fragment>
    ))}
    <Rule $gap={22} />
    <AxisTools>
      {['axis1', 'axis2', 'axis3'].map((n, i) => (
        <IconButton key={n} aria-label={`Achsenmodus ${i + 1}`} $tone="#3a3a3a" $fill={i ? undefined : '#1b2126'}><Glyph name={n} w={14} /></IconButton>
      ))}
    </AxisTools>
    <Rule />
    <SnapOption><input type="checkbox" />Ausrichten</SnapOption>
    <IconButton aria-label="Kanten" $w={16}><Glyph name="snapTip" w={13} /></IconButton>
    <IconButton aria-label="Merkmale" $w={34} $tone={color.blueDim}><Glyph name="extent" w={13} /></IconButton>
    <Workspaces>
      <WorkspaceTab $on>Standard<MenuLines /></WorkspaceTab>
      {['Lernen', 'Original', 'Kleiner Bildschirm', 'Bibliotheken'].map(n => <WorkspaceTab key={n}>{n}</WorkspaceTab>)}
    </Workspaces>
    <IconButton aria-label="Weitere" $w={44}><Glyph name="chevrons" w={11} /></IconButton>
    <Wide name="workspace" w={19} h={16} />
    <HelpSearch><Glyph name="search" w={13} /><input aria-label="Hilfe durchsuchen" placeholder="Hilfe durchsuchen" /></HelpSearch>
  </Toolbar>
);

const ProjectPanel = () => (
  <Panel>
    <ProjectTabs>
      <ProjectTab $on>Projekt<MenuLines /></ProjectTab>
      <EffectTab><Swatch />Effekteinstellungen Unterkomp</EffectTab>
      <MoreTabs aria-label="Weitere Fenster"><Glyph name="chevrons" w={11} /></MoreTabs>
    </ProjectTabs>
    <ItemInfo>
      <Thumb />
      <InfoLines>
        <strong>Unterkomp. 1</strong><InfoTriangle />, 2 Mal verwendet<br />
        1920 x 1080 (1,00)<br />
        Δ0:00:30:00, 30,00 fps
      </InfoLines>
    </ItemInfo>
    <ProjectSearch><Glyph name="searchDown" w={16} /><input aria-label="Projekt durchsuchen" /></ProjectSearch>
    <ProjectTable>
      <colgroup><col style={{ width: 15 }} /><col /><col style={{ width: 12 }} /></colgroup>
      <thead>
        <tr><th /><th><HeadCell>Name<SortMark /></HeadCell></th><th><TagSlot><Glyph name="tag" w={10} /></TagSlot></th></tr>
      </thead>
      <tbody>
        {projectItems.map(item => (
          <tr key={item.name}>
            <td>{item.folder && <Expander aria-label="Aufklappen"><Chevron right /></Expander>}</td>
            <td><ItemName $selected={item.selected}><Glyph name={item.folder ? 'folder' : 'comp'} w={14} /><span>{item.name}</span></ItemName></td>
            <td>{item.folder && <TreeButton aria-label="Flussdiagramm"><Glyph name="tree" w={13} /></TreeButton>}</td>
          </tr>
        ))}
      </tbody>
    </ProjectTable>
    <PanelFooter>
      <IconButton aria-label="Footage interpretieren"><Wide name="interpret" w={20} h={14} /></IconButton>
      <IconButton aria-label="Neuer Ordner"><Glyph name="folder" w={14} /></IconButton>
      <IconButton aria-label="Neue Komposition"><Glyph name="comp" w={15} /></IconButton>
      <IconButton aria-label="Projekteinstellungen"><Glyph name="rocket" w={15} /></IconButton>
      <DepthButton>8-Bit-Kanal</DepthButton>
      <IconButton aria-label="Löschen"><Glyph name="trash" w={13} /></IconButton>
      <ScrollPill />
    </PanelFooter>
  </Panel>
);

const handles = ['0%', '50%', '100%'].flatMap(x => ['0%', '50%'].map(y => [x, y])).filter(([x, y]) => !(x === '50%' && y === '50%'));

const CompositionPanel = () => (
  <Panel>
    <CompTabs>
      <Cross />
      <Swatch />
      <CompLock aria-label="Sperren"><Glyph name="unlock" w={10} /></CompLock>
      <CompName>Komposition <em>Komp 1</em></CompName>
      <MenuLines />
    </CompTabs>
    <CompPath>
      <PathChip>Komp 1<Svg $w={9} $line={1.1} viewBox="0 0 9 9" aria-hidden><path d="M6 .5 3 4.500l3 4" /></Svg></PathChip>
      <button>Unterkomp. 1</button>
    </CompPath>
    <Viewer>
      <Canvas>
        PSD-Tutorials
        {handles.map(([x, y]) => <Handle key={x + y} $x={x} $y={y} />)}
        <Anchor $w={18} $line={2} viewBox="0 0 18 18" aria-hidden><circle cx="9" cy="9" r="4.500" /><path d="M9 1v5M9 12v5M1 9h5M12 9h5" /></Anchor>
      </Canvas>
      <Notice>Anzeige-Beschleunigung deaktiviert</Notice>
    </Viewer>
    <ViewerBar>
      <IconButton aria-label="Vorschau immer"><Glyph name="stack" w={14} /></IconButton>
      <IconButton aria-label="Primärer Viewer"><Glyph name="monitor" w={13} /></IconButton>
      <IconButton aria-label="VR"><Glyph name="mask" w={15} /></IconButton>
      <Dropdown label="Vergrößerung" value="50%" w={68} />
      <IconButton aria-label="Raster"><Glyph name="target" w={14} /></IconButton>
      <IconButton aria-label="Masken" $tone={color.blue} $fill="#151515"><Glyph name="shape" w={13} /></IconButton>
      <TimeBox>0:00:01:06</TimeBox>
      <IconButton aria-label="Schnappschuss"><Glyph name="snapshot" w={14} /></IconButton>
      <IconButton aria-label="Schnappschuss anzeigen" $tone="#3e3e3e"><Glyph name="links" w={14} /></IconButton>
      <IconButton aria-label="Kanäle"><Glyph name="rgb" w={14} /></IconButton>
      <Dropdown label="Auflösung" value="(Halb)" w={87} />
      <IconButton aria-label="Relevanter Bereich" $w={21}><Glyph name="region" w={14} /></IconButton>
      <IconButton aria-label="Transparenzraster"><Glyph name="checker" w={14} /></IconButton>
      <Dropdown label="Ansicht" value="Aktive Kamera" w={104} />
      <Rule $gap={1} />
      <Dropdown label="Ansichtslayout" value="1 Ansi..." w={69} />
      <IconButton aria-label="Pixelseitenverhältnis"><Glyph name="aspect" w={14} /></IconButton>
      <IconButton aria-label="Schnelle Vorschau" $fill="#181818"><Glyph name="fast" w={14} /></IconButton>
      <IconButton aria-label="Zeitleiste"><Glyph name="chart" w={14} /></IconButton>
      <IconButton aria-label="Flussdiagramm"><Glyph name="tree" w={13} /></IconButton>
      <Rule $gap={1} />
      <IconButton aria-label="Belichtung"><Glyph name="aperture" w={12} /></IconButton>
      <Exposure>+0,0</Exposure>
    </ViewerBar>
  </Panel>
);

const SidePanels = () => (
  <Side>
    {['Info', 'Audio', 'Vorschau', 'Effekte und Vorgaben'].map(n => <SideItem key={n}>{n}</SideItem>)}
    <SideItem $open>Ausrichten<MenuLines /></SideItem>
    <AlignPanel>
      <AlignLabel>Ebenen ausrichten an:</AlignLabel>
      <Dropdown label="Ebenen ausrichten an" value="Komposition" w={110} h={17} />
      <AlignRow>
        {alignShapes.map((d, i) => <button key={i} aria-label={`Ausrichten ${i + 1}`}><Svg $w={17} viewBox="0 0 17 17"><path fill="currentColor" strokeWidth="1" d={d} /></Svg></button>)}
      </AlignRow>
      <AlignLabel $low>Ebenen verteilen:</AlignLabel>
      <AlignRow $faint>
        {spreadShapes.map((d, i) => <button key={i} aria-label={`Verteilen ${i + 1}`}><Svg $w={17} $h={10} viewBox="0 0 17 10"><path fill="currentColor" strokeWidth="1" d={d} /></Svg></button>)}
      </AlignRow>
    </AlignPanel>
    {['Zeichen', 'Absatz', 'Tracker'].map(n => <SideItem key={n}>{n}</SideItem>)}
  </Side>
);

const LayerList = () => (
  <LayerTable>
    <colgroup>{columns.map((w, i) => <col key={i} style={{ width: w }} />)}</colgroup>
    <thead>
      <HeadRow>
        <th><Switches $pad={4}>{['eye', 'speaker', 'dot', 'lock'].map(n => <Switch key={n} aria-label={n}><Glyph name={n} w={n === 'lock' ? 11 : 12} /></Switch>)}</Switches></th>
        <th><Cell $pad={13} $rule $tone={color.icon}><Glyph name="tag" w={12} /></Cell></th>
        <th><Cell $pad={6} $rule>Nr.{headDot}</Cell></th>
        <th><Cell $pad={4} $rule>Ebenenname</Cell></th>
        <th>
          <Cell $rule>
            <Switches $pad={4}>
              {['shy', 'sun', 'quality'].map(n => <Switch key={n} aria-label={n}><Glyph name={n} w={11} /></Switch>)}
              <Switch>fx</Switch>
              {['film', 'blur', 'adjust', 'cube'].map(n => <Switch key={n} aria-label={n}><Glyph name={n} w={12} /></Switch>)}
            </Switches>
          </Cell>
        </th>
        <th><Cell $pad={5} $rule>Modus{headDot}</Cell></th>
        <th><Cell $pad={6}>T</Cell></th>
        <th><Cell $pad={2}>.BewMas</Cell></th>
        <th><Cell $pad={5} $rule>Übergeordnet und verkn...</Cell></th>
        {['In', 'Out', 'Dauer', 'Dehnung'].map(n => <th key={n}><Cell $pad={5} $rule>{n}{n !== 'Dehnung' && headDot}</Cell></th>)}
        <th><Cell $rule /></th>
      </HeadRow>
    </thead>
    <tbody>
      {layers.map(l => (
        <LayerRow key={l.nr} $selected={l.selected}>
          <td>
            <Switches $pad={4}>
              <Switch aria-label="Video" $filled={!l.visible}>{l.visible && <Glyph name="eye" w={12} />}</Switch>
              <Switch aria-label="Audio" />
              <Switch aria-label="Solo" $filled={l.selected} />
              <Switch aria-label="Schützen" $filled />
            </Switches>
          </td>
          <td><Cell $pad={4}><Expander aria-label="Aufklappen"><Chevron right /></Expander><Swatch $size={12} $tall={14} /></Cell></td>
          <td><Cell $pad={7}>{l.nr}</Cell></td>
          <td><Cell $pad={2}><Glyph name="comp" w={15} /><LayerName $selected={l.selected}>{l.name}</LayerName></Cell></td>
          <td>
            <Switches $pad={5}>
              <Switch aria-label="Tarnung"><Glyph name="shy" w={11} /></Switch>
              <Switch aria-label="Transformationen falten" $filled />
              <Switch aria-label="Qualität" $filled><Glyph name="slash" w={11} /></Switch>
              <Switch aria-label="Effekte" />
              <Switch aria-label="Frame-Überblendung" />
              <Switch aria-label="Bewegungsunschärfe" $filled />
              <Switch aria-label="Einstellungsebene" $filled />
              <Switch aria-label="3D-Ebene" $filled />
            </Switches>
          </td>
          <td><Cell $pad={4}><Dropdown label="Modus" value="Normal" w={70} h={16} /></Cell></td>
          <td><Cell $pad={3}><Switch aria-label="Transparenz erhalten" $filled /></Cell></td>
          <td><Cell $pad={2}>{l.matte && <Dropdown label="Bewegte Maske" value={l.matte} w={66} h={16} />}</Cell></td>
          <td><Cell $pad={6} $tone={color.icon}><Glyph name="pickwhip" w={12} /><Cell $pad={6}><Dropdown label="Übergeordnet" value="Ohne" w={89} h={16} /></Cell></Cell></td>
          {[l.start, l.end, l.length, '100,0%'].map((t, i) => <td key={i}><Cell $pad={8}><TimeLink>{t}</TimeLink></Cell></td>)}
          <td />
        </LayerRow>
      ))}
    </tbody>
  </LayerTable>
);

const TimeGraph = () => (
  <GraphSide>
    <TrackRow $h={2} />
    <TrackRow $h={10}>
      <Cap />
      <Navigator><NavRange /><Cap $end /></Navigator>
    </TrackRow>
    <TrackRow $h={20}>
      <span />
      <Ruler>
        {Array.from({ length: 11 }, (_, i) => (
          <RulerMark key={i} $first={i === 0} style={{ left: at(i * 2) }}>{i ? `${String(i * 2).padStart(2, '0')}s` : ':00s'}</RulerMark>
        ))}
      </Ruler>
    </TrackRow>
    <TrackRow $h={16} $bg="#000">
      <Cap />
      <WorkArea />
      <Rail><Svg $w={11} $h={14} viewBox="0 0 11 14"><path {...F} d="M0 0h11v9l-5.500 5L0 9z" /></Svg></Rail>
    </TrackRow>
    <TrackRow $h={4}><span /><CacheLine>{cacheGaps.map(g => <CacheGap key={g} style={{ left: at(g) }} />)}</CacheLine></TrackRow>
    <TrackRow $h={17}>
      <span />
      <LayerTrack><Span $bg="#756a5e" style={{ left: 0, width: at(5.33) }} /></LayerTrack>
      <Rail><Svg $w={13} $h={12} viewBox="0 0 16 16"><path d="M1 10 10 1" /><circle cx="6" cy="12" r="3" /><path {...F} d="M9 5h7v8H9z" /></Svg></Rail>
    </TrackRow>
    <TrackRow $h={17}>
      <span />
      <LayerTrack $selected>
        <Span $bg="linear-gradient(90deg, #6f8ba6, #7d8c93)" $foot={color.blue} style={{ left: 0, width: at(1.05) }} />
        <Span $bg="#9ba08f" $foot="#bcd6c4" style={{ left: at(3.87), width: at(1.46) }} />
        <Marker $bg="#5b88b5" style={{ left: 0, width: at(0.54) }}>1</Marker>
        <Marker $bg="#98a38f" style={{ left: at(3.87), width: at(1.1) }}>TEXT</Marker>
      </LayerTrack>
    </TrackRow>
    <EmptyTracks><span /><i /><span /></EmptyTracks>
    <GraphFooter>
      <Svg $w={11} $h={6} viewBox="0 0 11 6"><path {...F} d="m0 6 3-3 1 1 3-4 4 6z" /></Svg>
      <ZoomSlider type="range" aria-label="Zeitzoom" defaultValue={28} />
      <Svg $w={15} $h={8} viewBox="0 0 15 8"><path {...F} d="m0 8 5-6 1.500 1L3 8zM4 8l6-8 5 8z" /></Svg>
      <ScrollTrack />
    </GraphFooter>
    <PlayheadLane><Playhead style={{ left: at(1.2) }} /></PlayheadLane>
  </GraphSide>
);

const TimelinePanel = () => (
  <Timeline>
    <TimelineTabs>
      <Tab $on $gap={10}><Cross /><Swatch />Komp 1<MenuLines /></Tab>
      <Tab $gap={12}><Swatch />Unterkomposition</Tab>
      <SecondTab $gap={12}><Swatch />Unterkomp. 1</SecondTab>
    </TimelineTabs>
    <TimelineBody>
      <LayerSide>
        <Controls>
          <Timecode><strong>0:00:01:06</strong><span>00036 (30:00 fps)</span></Timecode>
          <LayerSearch>
            <Glyph name="searchDown" w={16} /><input aria-label="Ebenen durchsuchen" />
            <ResizeCursor $w={14} $h={8} $line={1} viewBox="0 0 14 8"><path fill="#000" stroke="#ccc" d="m0 4 4-4v3h6V0l4 4-4 4V5H4v3z" /></ResizeCursor>
          </LayerSearch>
          <ControlButton $w={30} aria-label="Miniflussdiagramm"><Glyph name="flow" /></ControlButton>
          <ControlButton $w={38} aria-label="3D-Entwurf"><Glyph name="draft3d" /></ControlButton>
          <ControlButton $w={30} aria-label="Tarnen"><Glyph name="shyBig" w={15} /></ControlButton>
          <ControlButton $w={24} aria-label="Frame-Überblendung"><Glyph name="film" w={14} /></ControlButton>
          <ControlButton $w={28} aria-label="Bewegungsunschärfe"><Glyph name="blur" w={14} /></ControlButton>
          <ControlButton $w={40} aria-label="Diagrammeditor"><Glyph name="graph" /></ControlButton>
        </Controls>
        <LayerList />
        <LayerFooter>
          {['copies', 'modes', 'braces'].map(n => <IconButton key={n} $w={16} aria-label={n} $tone={color.frame}><Glyph name={n} w={11} /></IconButton>)}
        </LayerFooter>
      </LayerSide>
      <TimeGraph />
    </TimelineBody>
  </Timeline>
);

export default function App() {
  return (
    <>
      <GlobalStyle />
      <Shell>
        <TitleBar>
          <AeBadge>Ae</AeBadge>
          <Title>Adobe After Effects CC 2019 - C:\Users\345\Desktop\proj 22.aep *</Title>
          <WindowButton aria-label="Minimieren"><Svg $w={10} $line={1} viewBox="0 0 10 10"><path d="M0 4.500h10" /></Svg></WindowButton>
          <WindowButton aria-label="Verkleinern"><Svg $w={10} $line={1} viewBox="0 0 10 10"><path d="M.5 2.500h7v7h-7zM2.500 2.500v-2h7v7h-2" /></Svg></WindowButton>
          <WindowButton aria-label="Schließen"><Svg $w={10} $line={1} viewBox="0 0 10 10"><path d="m0 0 10 10M10 0 0 10" /></Svg></WindowButton>
        </TitleBar>
        <MenuBar>{menus.map(m => <button key={m}>{m}</button>)}</MenuBar>
        <ToolStrip />
        <Workspace>
          <ProjectPanel />
          <CompositionPanel />
          <SidePanels />
        </Workspace>
        <TimelinePanel />
        <Taskbar>
          <TaskButton aria-label="Start"><Glyph name="windows" /></TaskButton>
          <TaskButton aria-label="Taskansicht"><Glyph name="taskView" /></TaskButton>
          <TaskButton $open aria-label="After Effects"><AeBadge $big>Ae</AeBadge></TaskButton>
          <Tray>
            <People aria-label="Kontakte"><Glyph name="people" w={14} /></People>
            <Svg $w={12} $h={7} viewBox="0 0 12 7"><path d="m0 6 6-5 6 5" /></Svg>
            <Glyph name="volume" w={14} />
            <Clock>{'12:43\n25.10.2018'}</Clock>
            <Glyph name="notice" w={16} />
          </Tray>
        </Taskbar>
      </Shell>
      <Watermark>
        <Svg $w={69} $h={61} viewBox="398 88 206 184">
          <path {...F} d="M447 214C425 195 396 150 398 105c2-20 34-20 52-8 26 14 48 38 62 62l-16 18c-14-30-38-58-62-68-14-6-28-10-28 4 0 36 22 78 41 101z" />
          <path strokeWidth="7" d="M447 214c-24 2-36 18-34 34 4 18 36 20 60 8" />
          <path {...F} fillRule="evenodd" d="M500 270c-36-4-40-46-26-76 16-34 60-68 106-68 26 0 26 20 10 44-20 34-56 62-90 76zM500 226c-2-34 26-68 68-86 14-4 16 2 6 16-18 30-48 54-74 70z" />
          <path {...F} d="M504 210c0-14 12-26 20-26 2 14-8 28-20 32zM504 262c-2-14 8-24 22-30 2 18-4 30-16 38z" />
        </Svg>
        PSD-Tutorials.de
      </Watermark>
    </>
  );
}
